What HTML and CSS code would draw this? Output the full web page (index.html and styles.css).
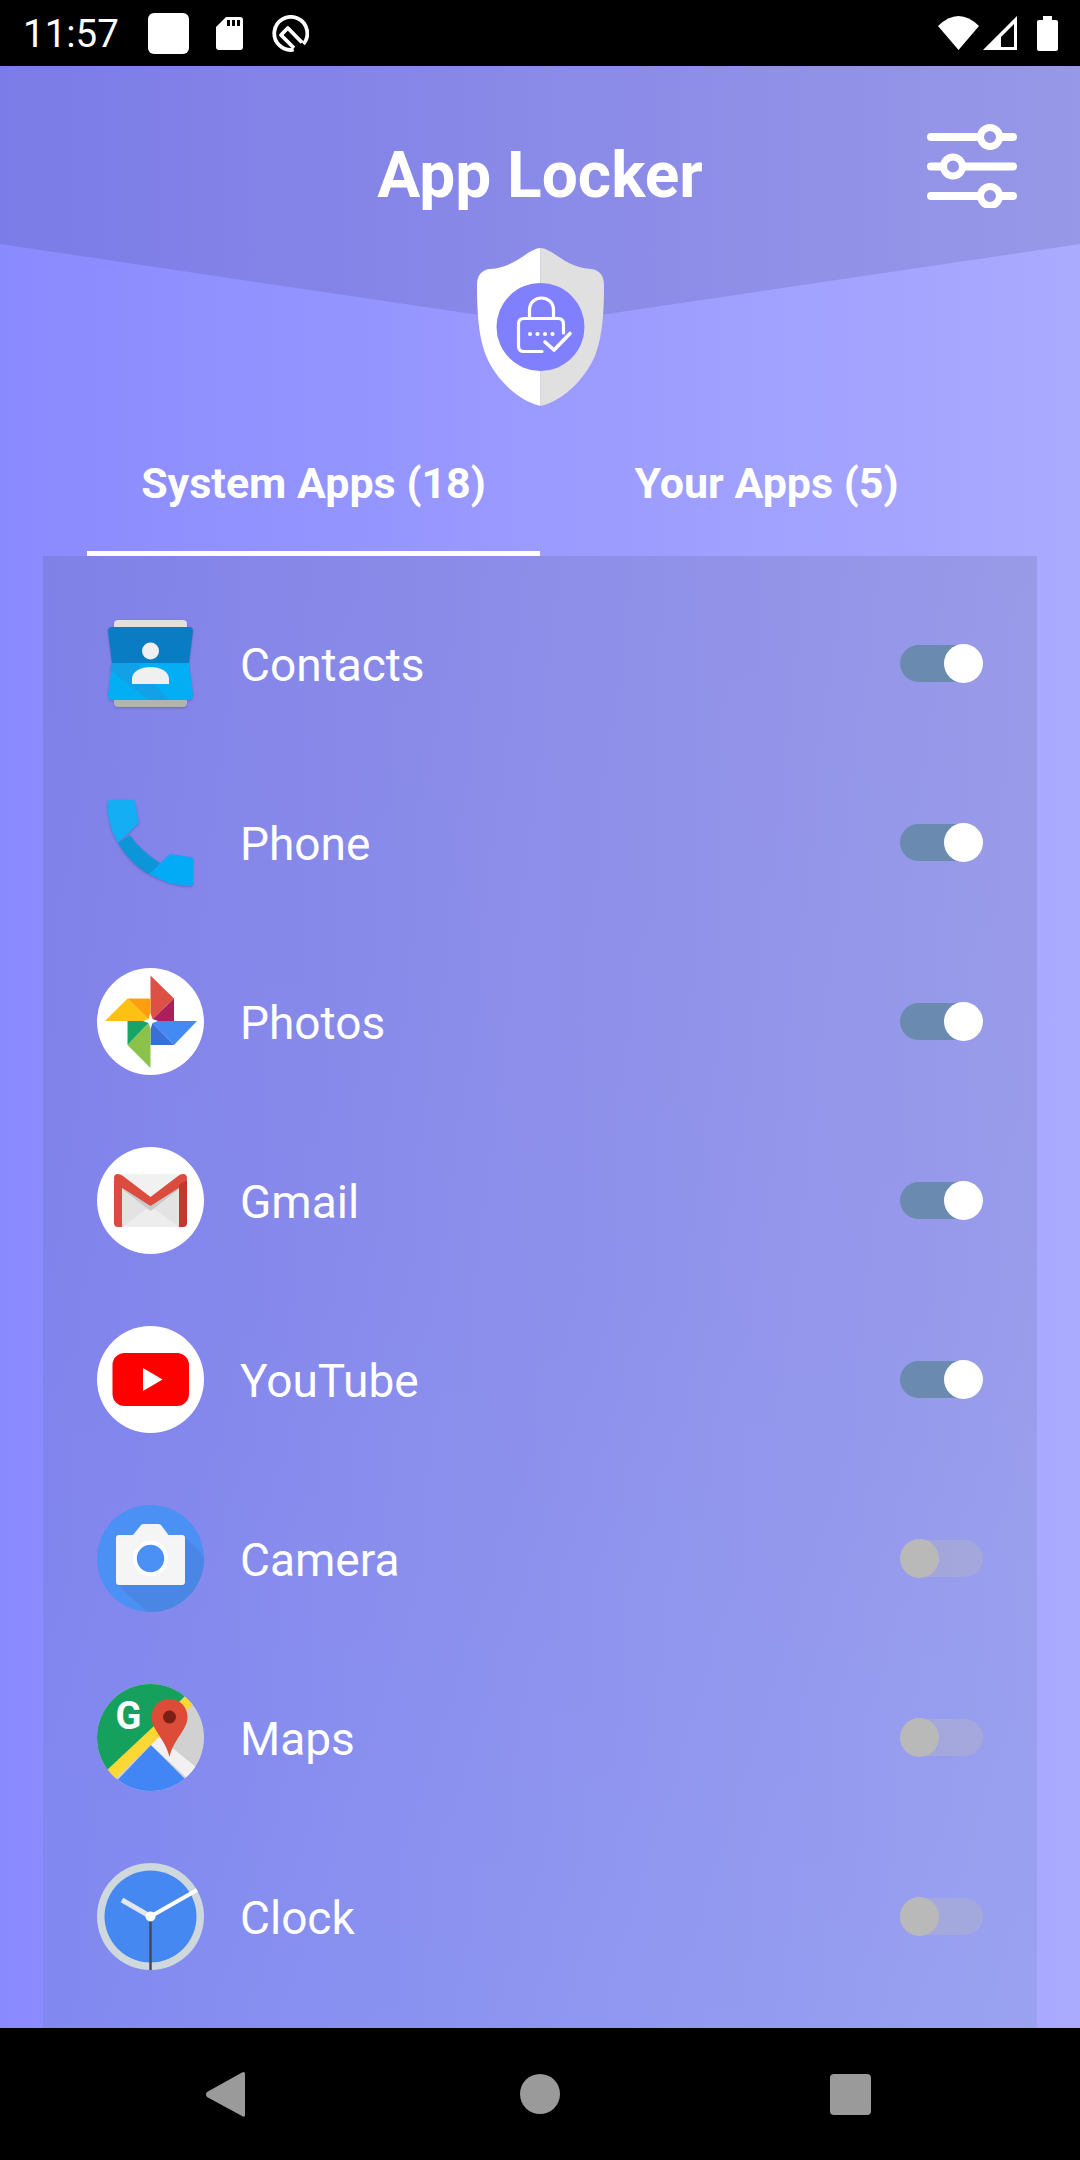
FILE: index.html
```html
<!DOCTYPE html>
<html lang="en">
<head>
    <meta charset="UTF-8">
    <meta name="viewport" content="width=device-width, initial-scale=1.0">
    <title>App Locker</title>
    <link rel="stylesheet" href="styles.css">
</head>
<body>

    <div class="screen">
        <!-- Status bar -->
        <div class="status-bar">
            <span class="status-time">11:57</span>
            <span class="status-square"></span>
            <svg class="status-sd" viewBox="0 0 27 33">
                <path fill="#fff" fill-rule="evenodd" d="M10 0H24Q27 0 27 3V30Q27 33 24 33H3Q0 33 0 30V10ZM11 3V9H14V3ZM16 3V9H19V3ZM21 3V9H24V3Z"/>
            </svg>
            <svg class="status-q" viewBox="0 0 37 37">
                <path fill="none" stroke="#fff" stroke-width="3.800" d="M31.400 29.100A16.500 16.500 0 1 0 21.700 34.700"/>
                <path fill="none" stroke="#fff" stroke-width="3.800" stroke-linejoin="round" d="M30 27.500 15.800 13 9 20 22 33"/>
            </svg>
            <span class="status-spacer"></span>
            <svg class="status-wifi" viewBox="0 0 41 34"><path fill="#fff" d="M0 10Q20.500 -10 41 10L20.500 34Z"/></svg>
            <svg class="status-signal" viewBox="0 0 34 34">
                <path fill="#fff" fill-rule="evenodd" d="M0 34 34 0V34ZM18 31H31V8L18 21Z"/>
            </svg>
            <svg class="status-battery" viewBox="0 0 21 35"><path fill="#fff" d="M6 0H15V4H19Q21 4 21 6V33Q21 35 19 35H2Q0 35 0 33V6Q0 4 2 4H6Z"/></svg>
        </div>

        <div class="app">
            <div class="app-band"></div>

            <div class="topbar">
                <span></span>
                <h1 class="title">App Locker</h1>
                <svg class="settings-icon" viewBox="0 0 90 84">
                    <g fill="none" stroke="#fff" stroke-width="8" stroke-linecap="round">
                        <path d="M4 13H50M75 13H86M4 42.500H14M38 42.500H86M4 72H50M75 72H86"/>
                    </g>
                    <g fill="none" stroke="#fff" stroke-width="7">
                        <circle cx="63" cy="13" r="9.500"/>
                        <circle cx="26" cy="42.500" r="9.500"/>
                        <circle cx="63" cy="72" r="9.500"/>
                    </g>
                </svg>
            </div>

            <svg class="shield" viewBox="0 0 127 158">
                <path fill="#fff" d="M63.500 0C50 1 40 19 13 21C4 22 0 28 0 37C0 60 1 86 8 105C16 127 38 152 63.500 158Z"/>
                <path fill="#e0e0e0" d="M63.500 0C77 1 87 19 114 21C123 22 127 28 127 37C127 60 126 86 119 105C111 127 89 152 63.500 158Z"/>
                <circle cx="63.500" cy="79" r="44" fill="#8080ff"/>
                <g fill="none" stroke="#fff" stroke-width="3.200" stroke-linecap="round" stroke-linejoin="round">
                    <path d="M52.500 70V62C52.500 46 76.500 46 76.500 62V70"/>
                    <path d="M65 103.500H47Q41.500 103.500 41.500 98V76Q41.500 70.500 47 70.500H81Q86.500 70.500 86.500 76V85"/>
                    <path stroke-width="3.600" d="M68 94 77 102 93 85.500"/>
                </g>
                <g fill="#fff">
                    <circle cx="53" cy="86" r="2.100"/>
                    <circle cx="60.500" cy="86" r="2.100"/>
                    <circle cx="68" cy="86" r="2.100"/>
                    <circle cx="75.500" cy="86" r="2.100"/>
                </g>
            </svg>

            <div class="tabs">
                <div class="tab tab-active">System Apps (18)</div>
                <div class="tab">Your Apps (5)</div>
            </div>

            <div class="card">
                <div class="row">
                    <svg class="app-icon app-icon-soft" viewBox="0 0 107 107">
                        <g transform="translate(0 10)">
                            <path fill="#e0e0e0" d="M17 4Q17 0 21 0H86Q90 0 90 4V10H17Z"/>
                            <path fill="#b3b3b3" d="M17 75H90V83Q90 87 86 87H21Q17 87 17 83Z"/>
                            <path fill="#0a7cc4" d="M11 11Q11 7 15 7H92Q96 7 96 11L92 43H15Z"/>
                            <path fill="#03aef5" d="M15 43H92L96 75Q96 80 92 80H15Q11 80 11 75Z"/>
                            <path fill="#12a0e6" d="M15 43H38L72 80H52L13 50Z"/>
                            <circle cx="53.500" cy="31" r="8.500" fill="#f0f0f0"/>
                            <path fill="#f0f0f0" d="M35 64V59C35 43 72 43 72 59V64Z"/>
                        </g>
                    </svg>
                    <span class="app-name">Contacts</span>
                    <div class="switch switch-on"><span class="thumb"></span></div>
                </div>

                <div class="row">
                    <svg class="app-icon app-icon-soft" viewBox="0 0 107 107">
                        <path fill="#0c96d8" d="M21 54 33 46C40 57 51 66 63 74L52 85C39 78 29 67 21 54Z"/>
                        <path fill="#14aef5" d="M13 11H35Q38 11 38 14L42 34 21 54C14 42 10.500 30 10.500 14Q10.500 11 13 11Z"/>
                        <path fill="#03aaf6" d="M73 65 93 68Q96 68 96 71V94Q96 97 93 97C78 97 65 92 52 85Z"/>
                    </svg>
                    <span class="app-name">Phone</span>
                    <div class="switch switch-on"><span class="thumb"></span></div>
                </div>

                <div class="row">
                    <svg class="app-icon" viewBox="0 0 107 107">
                        <circle cx="53.500" cy="53.500" r="53.500" fill="#fff"/>
                        <path fill="#dd5044" d="M53.500 7.500 77 30.500 53.500 53Z"/>
                        <path fill="#ad1f5c" d="M77 30.500V53H53.500Z"/>
                        <path fill="#438af5" d="M100 53 77 77 53.500 53Z"/>
                        <path fill="#3b6fd8" d="M77 77H53.500V53Z"/>
                        <path fill="#8bc24a" d="M53.500 100 30.500 77 53.500 53Z"/>
                        <path fill="#17a567" d="M30.500 77V53H53.500Z"/>
                        <path fill="#fdc113" d="M8 53 30.500 30.500 53.500 53Z"/>
                        <path fill="#ff9f10" d="M30.500 30.500H53.500V53Z"/>
                        <path fill="#fff" d="M53.500 45 55.500 51 61 53 55.500 55 53.500 61 51.500 55 46 53 51.500 51Z"/>
                    </svg>
                    <span class="app-name">Photos</span>
                    <div class="switch switch-on"><span class="thumb"></span></div>
                </div>

                <div class="row">
                    <svg class="app-icon" viewBox="0 0 107 107">
                        <circle cx="53.500" cy="53.500" r="53.500" fill="#fff"/>
                        <rect x="17" y="27" width="73" height="53" rx="4" fill="#f1f1f1"/>
                        <path fill="#e3e3e3" d="M25 34 53.500 59 82 34V80H25Z"/>
                        <path fill="#ededed" d="M25 80 53.500 59 82 80Z"/>
                        <path fill="#c9c9c9" d="M25 38V42L53.500 64 82 42V38L53.500 59Z"/>
                        <path fill="#db4b3e" d="M17 31Q17 27 21 27Q23 27 26 29L53.500 50 81 29Q84 27 86 27Q90 27 90 31 90 35 88 37L53.500 59 19 37Q17 35 17 31Z"/>
                        <path fill="#db4b3e" d="M17 33 25 38V80H21Q17 80 17 76Z"/>
                        <path fill="#c0392b" d="M90 33 82 38V80H86Q90 80 90 76Z"/>
                    </svg>
                    <span class="app-name">Gmail</span>
                    <div class="switch switch-on"><span class="thumb"></span></div>
                </div>

                <div class="row">
                    <svg class="app-icon" viewBox="0 0 107 107">
                        <circle cx="53.500" cy="53.500" r="53.500" fill="#fff"/>
                        <rect x="15.500" y="27" width="76.500" height="53" rx="12" fill="#f00"/>
                        <path fill="#fff" d="M46 42V65L65.500 53.500Z"/>
                    </svg>
                    <span class="app-name">YouTube</span>
                    <div class="switch switch-on"><span class="thumb"></span></div>
                </div>

                <div class="row">
                    <svg class="app-icon" viewBox="0 0 107 107">
                        <circle cx="53.500" cy="53.500" r="53.500" fill="#4a90f5"/>
                        <path fill="#4a86e4" d="M88 32 104 48 107 53.500C107 83 83 107 53.500 107H50L19 78Z"/>
                        <path fill="#f5f5f5" d="M22 30H36L44 20Q45 19 47 19H61Q63 19 64 20L71.500 30H85Q88 30 88 33V77Q88 80 85 80H22Q19 80 19 77V33Q19 30 22 30Z"/>
                        <circle cx="53.500" cy="53.500" r="15.700" fill="#4a90f5" stroke="#fff" stroke-width="4"/>
                    </svg>
                    <span class="app-name">Camera</span>
                    <div class="switch switch-off"><span class="thumb"></span></div>
                </div>

                <div class="row">
                    <svg class="app-icon" viewBox="0 0 107 107">
                        <clipPath id="mapsClip"><circle cx="53.500" cy="53.500" r="53.500"/></clipPath>
                        <g clip-path="url(#mapsClip)">
                            <rect width="107" height="107" fill="#d1d1d1"/>
                            <path fill="#16a05d" d="M0 0H100L0 100Z"/>
                            <path fill="#4285f4" d="M54 61 10 107H100Z"/>
                            <path fill="#f1f1f1" d="M54 61 62 53 100 84 91 95Z"/>
                            <path fill="#fdd835" d="M10 86 88 13 96 20 18 95Z"/>
                        </g>
                        <text class="maps-g" x="31.500" y="44.500">G</text>
                        <path fill="#dd4b39" d="M72.500 15C62 15 54.500 23 54.500 33C54.500 46 68 54 72.500 73C77 54 90.500 46 90.500 33C90.500 23 83 15 72.500 15Z"/>
                        <circle cx="72.500" cy="33" r="6.500" fill="#7b1f15"/>
                    </svg>
                    <span class="app-name">Maps</span>
                    <div class="switch switch-off"><span class="thumb"></span></div>
                </div>

                <div class="row">
                    <svg class="app-icon" viewBox="0 0 107 107">
                        <circle cx="53.500" cy="53.500" r="53.500" fill="#cfd8dc"/>
                        <circle cx="53.500" cy="53.500" r="46" fill="#4688f2"/>
                        <path stroke="#444b55" stroke-width="2.500" d="M53.500 53.500V107"/>
                        <path stroke="#e3e6ea" stroke-width="5" d="M53.500 53.500 25 37"/>
                        <path stroke="#fff" stroke-width="4" d="M53.500 53.500 100 27"/>
                        <circle cx="53.500" cy="53.500" r="5" fill="#fff"/>
                    </svg>
                    <span class="app-name">Clock</span>
                    <div class="switch switch-off"><span class="thumb"></span></div>
                </div>
            </div>
        </div>

        <!-- Navigation bar -->
        <div class="nav-bar">
            <svg class="nav-back" viewBox="0 0 39 45"><path fill="#9a9a9a" d="M1 20 36 .5Q39 -1 39 2V43Q39 46 36 44L1 25Q-1 22.500 1 20Z" /></svg>
            <span class="nav-home"></span>
            <span class="nav-recent"></span>
        </div>
    </div>

</body>
</html>
```

FILE: styles.css
```css
/* Base styling */
body {
    margin: 0;
    padding: 0;
    font-family: 'Roboto', sans-serif;
    background: #000;
    color: #fff;
}

.screen {
    width: 1080px;
    height: 2160px;
    display: flex;
    flex-direction: column;
    overflow: hidden;
}

/* Status bar */
.status-bar {
    height: 66px;
    flex: none;
    background: #000;
    display: flex;
    align-items: center;
    padding: 0 22px 0 23px;
}

.status-time {
    font-size: 38.5px;
    width: 125px;
}

.status-square {
    width: 41px;
    height: 41px;
    background: #fff;
    border-radius: 6px;
}

.status-sd {
    width: 27px;
    height: 33px;
    margin-left: 27px;
}

.status-q {
    width: 37px;
    height: 37px;
    margin-left: 29px;
}

.status-spacer {
    flex: 1;
}

.status-wifi {
    width: 41px;
    height: 34px;
}

.status-signal {
    width: 34px;
    height: 34px;
    margin-left: 4px;
}

.status-battery {
    width: 21px;
    height: 35px;
    margin-left: 20px;
}

/* Main area */
.app {
    flex: 1;
    min-height: 0;
    position: relative;
    display: flex;
    flex-direction: column;
    background: linear-gradient(to right, #8a8aff, #aaaaff);
}

.app-band {
    position: absolute;
    top: 0;
    left: 0;
    width: 100%;
    height: 258px;
    background: rgba(30, 30, 80, 0.13);
    clip-path: polygon(0 0, 100% 0, 100% 178px, 50% 100%, 0 178px);
}

.topbar {
    position: relative;
    height: 182px;
    flex: none;
    box-sizing: border-box;
    padding-top: 36px;
    display: grid;
    grid-template-columns: 1fr auto 1fr;
    align-items: center;
}

.title {
    margin: 0;
    font-size: 64px;
    font-weight: 700;
}

.settings-icon {
    width: 90px;
    height: 84px;
    justify-self: end;
    margin: -18px 63px 0 0;
}

.shield {
    position: relative;
    width: 127px;
    height: 158px;
    flex: none;
    align-self: center;
}

/* Tabs */
.tabs {
    height: 150px;
    flex: none;
    display: flex;
    padding: 0 87px;
}

.tab {
    flex: 1;
    box-sizing: border-box;
    padding-top: 51px;
    font-size: 43px;
    font-weight: 700;
    line-height: 52px;
    text-align: center;
}

.tab-active {
    border-bottom: 5px solid #fff;
}

/* App list */
.card {
    flex: 1;
    min-height: 0;
    margin: 0 43px;
    padding: 18px 54px 0;
    overflow: hidden;
    background: linear-gradient(to bottom, rgba(65, 70, 100, 0.15), rgba(65, 85, 122, 0.15) 50%, rgba(70, 125, 160, 0.15));
}

.row {
    height: 179px;
    display: flex;
    align-items: center;
}

.app-icon {
    width: 107px;
    height: 107px;
    flex: none;
}

.app-icon-soft {
    filter: drop-shadow(0 1px 1px rgba(40, 40, 90, 0.3));
}

.app-name {
    flex: 1;
    margin-left: 36px;
    padding-top: 2px;
    font-size: 46px;
}

.maps-g {
    font-family: 'Roboto', sans-serif;
    font-size: 38px;
    font-weight: 700;
    fill: #fff;
    text-anchor: middle;
}

/* Switches */
.switch {
    width: 83px;
    height: 37px;
    border-radius: 19px;
    display: flex;
    align-items: center;
}

.thumb {
    width: 39px;
    height: 39px;
    flex: none;
    border-radius: 50%;
}

.switch-on {
    justify-content: flex-end;
    background: #6a8ab0;
}

.switch-on .thumb {
    background: #fff;
}

.switch-off {
    background: rgba(185, 185, 185, 0.35);
}

.switch-off .thumb {
    background: #b9b9b9;
}

/* Navigation bar */
.nav-bar {
    height: 132px;
    flex: none;
    background: #000;
    position: relative;
    display: grid;
    grid-template-columns: 1fr 1fr 1fr;
    align-items: center;
    justify-items: center;
}

.nav-back {
    width: 39px;
    height: 45px;
    justify-self: start;
    margin-left: 206px;
}

.nav-home {
    width: 40px;
    height: 40px;
    background: #9a9a9a;
    border-radius: 50%;
}

.nav-recent {
    width: 41px;
    height: 41px;
    background: #9a9a9a;
    border-radius: 4px;
    justify-self: end;
    margin-right: 209px;
}
```
